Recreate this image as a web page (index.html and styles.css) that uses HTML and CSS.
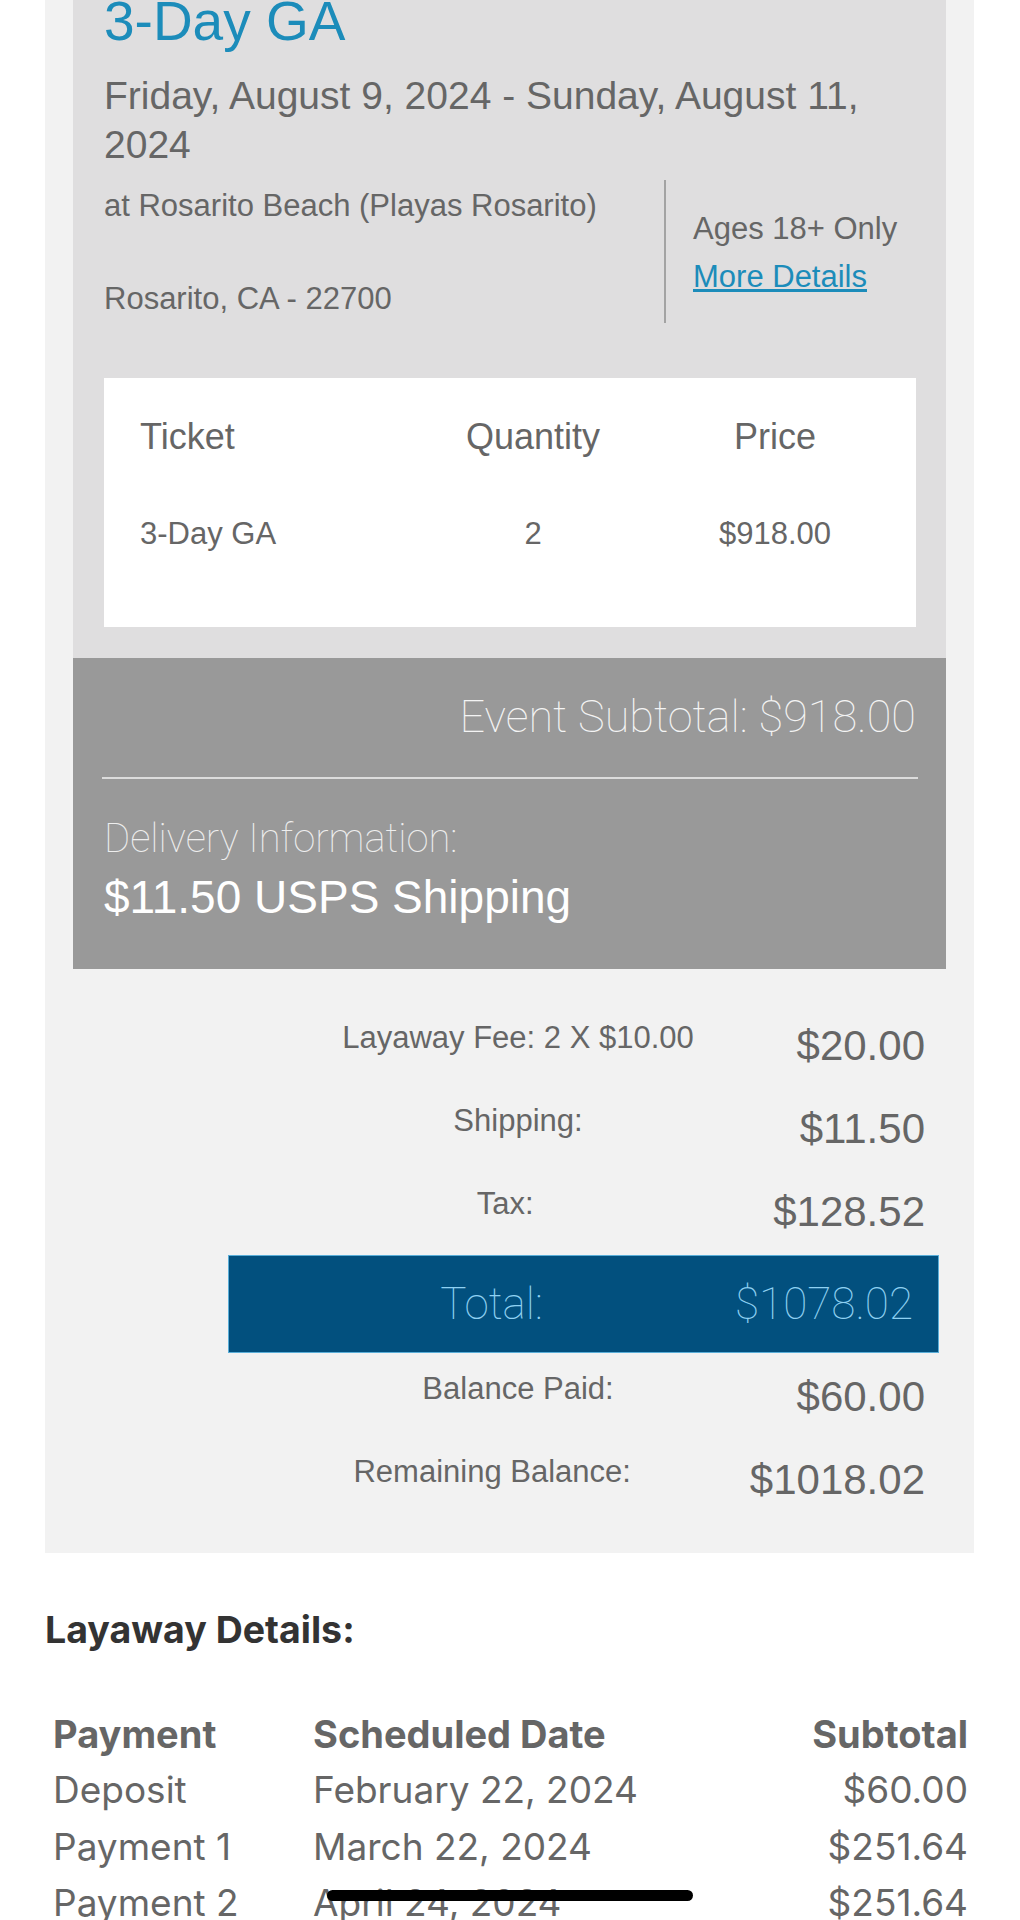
FILE: index.html
```
<html>
	<head>
		<meta charset="utf-8">
		<title>Order Summary</title>
		<meta name="viewport" content="width=device-width,initial-scale=1" />
		<link rel="stylesheet" href="styles.css">
	</head>
	<body>
		<div class="order">
			<div class="event">
				<h1 class="event-name">3-Day GA</h1>
				<p class="event-date">Friday, August 9, 2024 - Sunday, August 11, 2024</p>
				<div class="venue">
					<p class="venue-addr">at Rosarito Beach (Playas Rosarito)<br><br>Rosarito, CA - 22700</p>
					<div class="venue-info">
						<p>Ages 18+ Only</p>
						<a href="#">More Details</a>
					</div>
				</div>
				<div class="tickets">
					<div class="tickets-head">
						<span>Ticket</span>
						<span>Quantity</span>
						<span>Price</span>
					</div>
					<div class="tickets-row">
						<span>3-Day GA</span>
						<span>2</span>
						<span>$918.00</span>
					</div>
				</div>
			</div>

			<div class="subtotal">
				<p class="subtotal-sum">Event Subtotal: $918.00</p>
				<hr>
				<p class="delivery-label">Delivery Information:</p>
				<p class="delivery-value">$11.50 USPS Shipping</p>
			</div>

			<div class="totals">
				<div class="sum-row">
					<span class="sum-label">Layaway Fee: 2 X $10.00</span>
					<span class="sum-value">$20.00</span>
				</div>
				<div class="sum-row">
					<span class="sum-label">Shipping:</span>
					<span class="sum-value">$11.50</span>
				</div>
				<div class="sum-row">
					<span class="sum-label">Tax:&nbsp;&nbsp;&nbsp;</span>
					<span class="sum-value">$128.52</span>
				</div>
				<div class="total-row">
					<span class="sum-label">Total:</span>
					<span class="sum-value">$1078.02</span>
				</div>
				<div class="sum-row">
					<span class="sum-label">Balance Paid:</span>
					<span class="sum-value">$60.00</span>
				</div>
				<div class="sum-row">
					<span class="sum-label">Remaining Balance:&nbsp;&nbsp;&nbsp;&nbsp;&nbsp;&nbsp;</span>
					<span class="sum-value">$1018.02</span>
				</div>
			</div>
		</div>

		<div class="layaway">
			<h2>Layaway Details:</h2>
			<table class="plan">
				<tr>
					<th>Payment</th>
					<th>Scheduled Date</th>
					<th class="num">Subtotal</th>
				</tr>
				<tr>
					<td>Deposit</td>
					<td>February 22, 2024</td>
					<td class="num">$60.00</td>
				</tr>
				<tr>
					<td>Payment 1</td>
					<td>March 22, 2024</td>
					<td class="num">$251.64</td>
				</tr>
				<tr>
					<td>Payment 2</td>
					<td>April 24, 2024</td>
					<td class="num">$251.64</td>
				</tr>
			</table>
		</div>

		<div class="home-bar"></div>
	</body>
</html>
```
FILE: styles.css
```
*{
	margin: 0;
	padding: 0;
}
body{
	background: #fff;
	color: #666;
	font-family: "Liberation Sans", Arial, sans-serif;
}
.order{
	width: 929px;
	margin: -9px 0 0 45px;
	padding: 0 28px;
	box-sizing: border-box;
	background: #f2f2f2;
}

/* event block */
.event{
	background: #dfdedf;
	padding: 0 30px 31px 31px;
}
.event-name{
	color: #1c8cba;
	font-size: 55px;
	line-height: 60px;
	font-weight: normal;
}
.event-date{
	margin-top: 20px;
	font-size: 39px;
	line-height: 49px;
}
.venue{
	display: flex;
	margin-top: 11px;
	font-size: 31px;
}
.venue-addr{
	flex: 1;
	padding-top: 3px;
	line-height: 46.5px;
}
.venue-info{
	width: 252px;
	box-sizing: border-box;
	border-left: 2px solid #a3a3a3;
	padding: 25px 0 0 27px;
	line-height: 48px;
}
.venue-info a{
	color: #1c8cba;
	text-decoration: underline;
}
.tickets{
	margin-top: 55px;
	background: #fff;
	padding: 39px 19px 76px 36px;
}
.tickets-head,
.tickets-row{
	display: grid;
	grid-template-columns: 1fr 240px 244px;
}
.tickets-head span:not(:first-child),
.tickets-row span:not(:first-child){
	text-align: center;
}
.tickets-head{
	font-size: 36px;
	line-height: 40px;
}
.tickets-row{
	margin-top: 60px;
	font-size: 31px;
	line-height: 34px;
}

/* grey subtotal band */
.subtotal{
	background: #999;
	padding: 33px 30px 46px 31px;
	font-family: Roboto, Lato, Inter, sans-serif;
}
.subtotal-sum{
	text-align: right;
	color: #f4f4f4;
	font-size: 45px;
	font-weight: 100;
	line-height: 52px;
}
.subtotal hr{
	border: 0;
	border-top: 2px solid #dcdcdc;
	margin: 34px -2px 0;
}
.delivery-label{
	margin-top: 34px;
	color: #eee;
	font-size: 40px;
	font-weight: 100;
	line-height: 52px;
}
.delivery-value{
	margin-top: 6px;
	color: #fff;
	font-family: "Liberation Sans", Arial, sans-serif;
	font-size: 46px;
	line-height: 52px;
}

/* totals */
.totals{
	padding: 49px 7px 49px 155px;
}
.sum-row{
	display: flex;
	margin-top: 31px;
	padding: 0 14px 0 73px;
}
.sum-row:first-child{
	margin-top: 0;
}
.sum-label{
	flex: 1;
	text-align: center;
	white-space: nowrap;
	font-size: 31px;
	line-height: 40px;
}
.sum-value{
	width: 190px;
	text-align: right;
	font-size: 42px;
	line-height: 48px;
	padding-top: 4px;
}
.total-row{
	display: flex;
	margin-top: 19px;
	padding: 22px 25px 22px 31px;
	background: #02507e;
	border: 1px solid #5aaed8;
	color: #8fd1f2;
	font-family: Roboto, Lato, Inter, sans-serif;
	font-weight: 100;
}
.total-row .sum-label,
.total-row .sum-value{
	font-size: 44px;
	line-height: 52px;
	padding-top: 0;
}
.total-row + .sum-row{
	margin-top: 16px;
}

/* layaway plan */
.layaway{
	margin: 55px 44px 0 45px;
	color: #333;
	font-family: Inter, "Liberation Sans", sans-serif;
}
.layaway h2{
	font-size: 37.5px;
	line-height: 44px;
	font-weight: 700;
}
.plan{
	width: 100%;
	margin-top: 54px;
	border-collapse: collapse;
	font-size: 37px;
	line-height: 56.5px;
}
.plan th,
.plan td{
	padding: 0 8px;
	text-align: left;
	white-space: nowrap;
}
.plan th{
	font-size: 38px;
	font-weight: 700;
}
.plan th:first-child{
	width: 244px;
}
.plan .num{
	text-align: right;
}

.home-bar{
	position: fixed;
	left: 327px;
	top: 1890px;
	width: 366px;
	height: 11px;
	border-radius: 6px;
	background: #000;
}
```
